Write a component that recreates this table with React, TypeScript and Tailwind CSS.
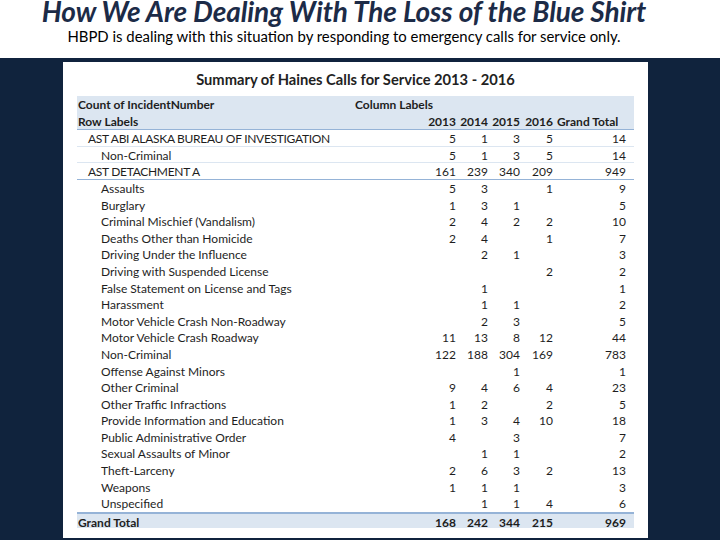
const rows: { label: string; indent: number; values: (number | null)[]; line?: string }[] = [
  { label: "AST ABI ALASKA BUREAU OF INVESTIGATION", indent: 1, values: [5, 1, 3, 5, 14], line: "border-b border-[#dce6f1]" },
  { label: "Non-Criminal", indent: 2, values: [5, 1, 3, 5, 14], line: "border-b border-[#dce6f1]" },
  { label: "AST DETACHMENT A", indent: 1, values: [161, 239, 340, 209, 949], line: "border-b border-[#95b3d7]" },
  { label: "Assaults", indent: 2, values: [5, 3, null, 1, 9] },
  { label: "Burglary", indent: 2, values: [1, 3, 1, null, 5] },
  { label: "Criminal Mischief (Vandalism)", indent: 2, values: [2, 4, 2, 2, 10] },
  { label: "Deaths Other than Homicide", indent: 2, values: [2, 4, null, 1, 7] },
  { label: "Driving Under the Influence", indent: 2, values: [null, 2, 1, null, 3] },
  { label: "Driving with Suspended License", indent: 2, values: [null, null, null, 2, 2] },
  { label: "False Statement on License and Tags", indent: 2, values: [null, 1, null, null, 1] },
  { label: "Harassment", indent: 2, values: [null, 1, 1, null, 2] },
  { label: "Motor Vehicle Crash Non-Roadway", indent: 2, values: [null, 2, 3, null, 5] },
  { label: "Motor Vehicle Crash Roadway", indent: 2, values: [11, 13, 8, 12, 44] },
  { label: "Non-Criminal", indent: 2, values: [122, 188, 304, 169, 783] },
  { label: "Offense Against Minors", indent: 2, values: [null, null, 1, null, 1] },
  { label: "Other Criminal", indent: 2, values: [9, 4, 6, 4, 23] },
  { label: "Other Traffic Infractions", indent: 2, values: [1, 2, null, 2, 5] },
  { label: "Provide Information and Education", indent: 2, values: [1, 3, 4, 10, 18] },
  { label: "Public Administrative Order", indent: 2, values: [4, null, 3, null, 7] },
  { label: "Sexual Assaults of Minor", indent: 2, values: [null, 1, 1, null, 2] },
  { label: "Theft-Larceny", indent: 2, values: [2, 6, 3, 2, 13] },
  { label: "Weapons", indent: 2, values: [1, 1, 1, null, 3] },
  { label: "Unspecified", indent: 2, values: [null, 1, 1, 4, 6] },
]

const cols = "grid grid-cols-[273px_106px_32px_32px_33px_76px] items-center"

const Row = ({ label, indent, values, line }: (typeof rows)[number]) => (
  <div className={`${cols} h-[16.6px] ${line ?? ""}`}>
    <span className={indent === 1 ? "pl-[11px] tracking-[-0.3px]" : "pl-[24px]"}>{label}</span>
    {values.map((v, i) => (
      <span key={i} className={i === 4 ? "text-right pr-[3px]" : "text-right"}>
        {v ?? ""}
      </span>
    ))}
  </div>
)

const App = () => {
  return (
    <div className="w-[720px] h-[540px] overflow-hidden bg-white font-['Lato',sans-serif] flex flex-col">
      <div className="h-[58px] shrink-0 flex flex-col items-center pr-[32px]">
        <h1 className="text-[28px] leading-[28px] -mt-[3px] font-bold italic text-[#1c2b47] tracking-[-0.1px]">
          How We Are Dealing With The Loss of the Blue Shirt
        </h1>
        <p className="text-[14.9px] leading-[18px] mt-[2px] text-black">
          HBPD is dealing with this situation by responding to emergency calls for service only.
        </p>
      </div>

      <div className="flex-1 bg-[#10233d] pt-[4px] pl-[63px]">
        <div className="w-[585px] h-[476px] bg-white px-[14px] flex flex-col text-[12px] text-[#1e1e1e]">
          <h2 className="h-[34px] shrink-0 flex items-center justify-center text-[14.7px] font-bold text-[#222]">
            Summary of Haines Calls for Service 2013 - 2016
          </h2>

          <div className="bg-[#dce6f1] border-b border-[#95b3d7] font-bold">
            <div className={`${cols} h-[16.6px]`}>
              <span className="pl-[1px]">Count of IncidentNumber</span>
              <span className="pl-[5px] col-span-5">Column Labels</span>
            </div>
            <div className={`${cols} h-[16.6px]`}>
              <span className="pl-[1px]">Row Labels</span>
              <span className="text-right">2013</span>
              <span className="text-right">2014</span>
              <span className="text-right">2015</span>
              <span className="text-right">2016</span>
              <span className="pl-[4px]">Grand Total</span>
            </div>
          </div>

          {rows.map((r, i) => (
            <Row key={i} {...r} />
          ))}

          <div className={`${cols} h-[16px] pb-[2px] bg-[#dce6f1] border-t-2 border-[#95b3d7] font-bold`}>
            <span className="pl-[1px]">Grand Total</span>
            <span className="text-right">168</span>
            <span className="text-right">242</span>
            <span className="text-right">344</span>
            <span className="text-right">215</span>
            <span className="text-right pr-[3px]">969</span>
          </div>
        </div>
      </div>
    </div>
  )
}

export default App
